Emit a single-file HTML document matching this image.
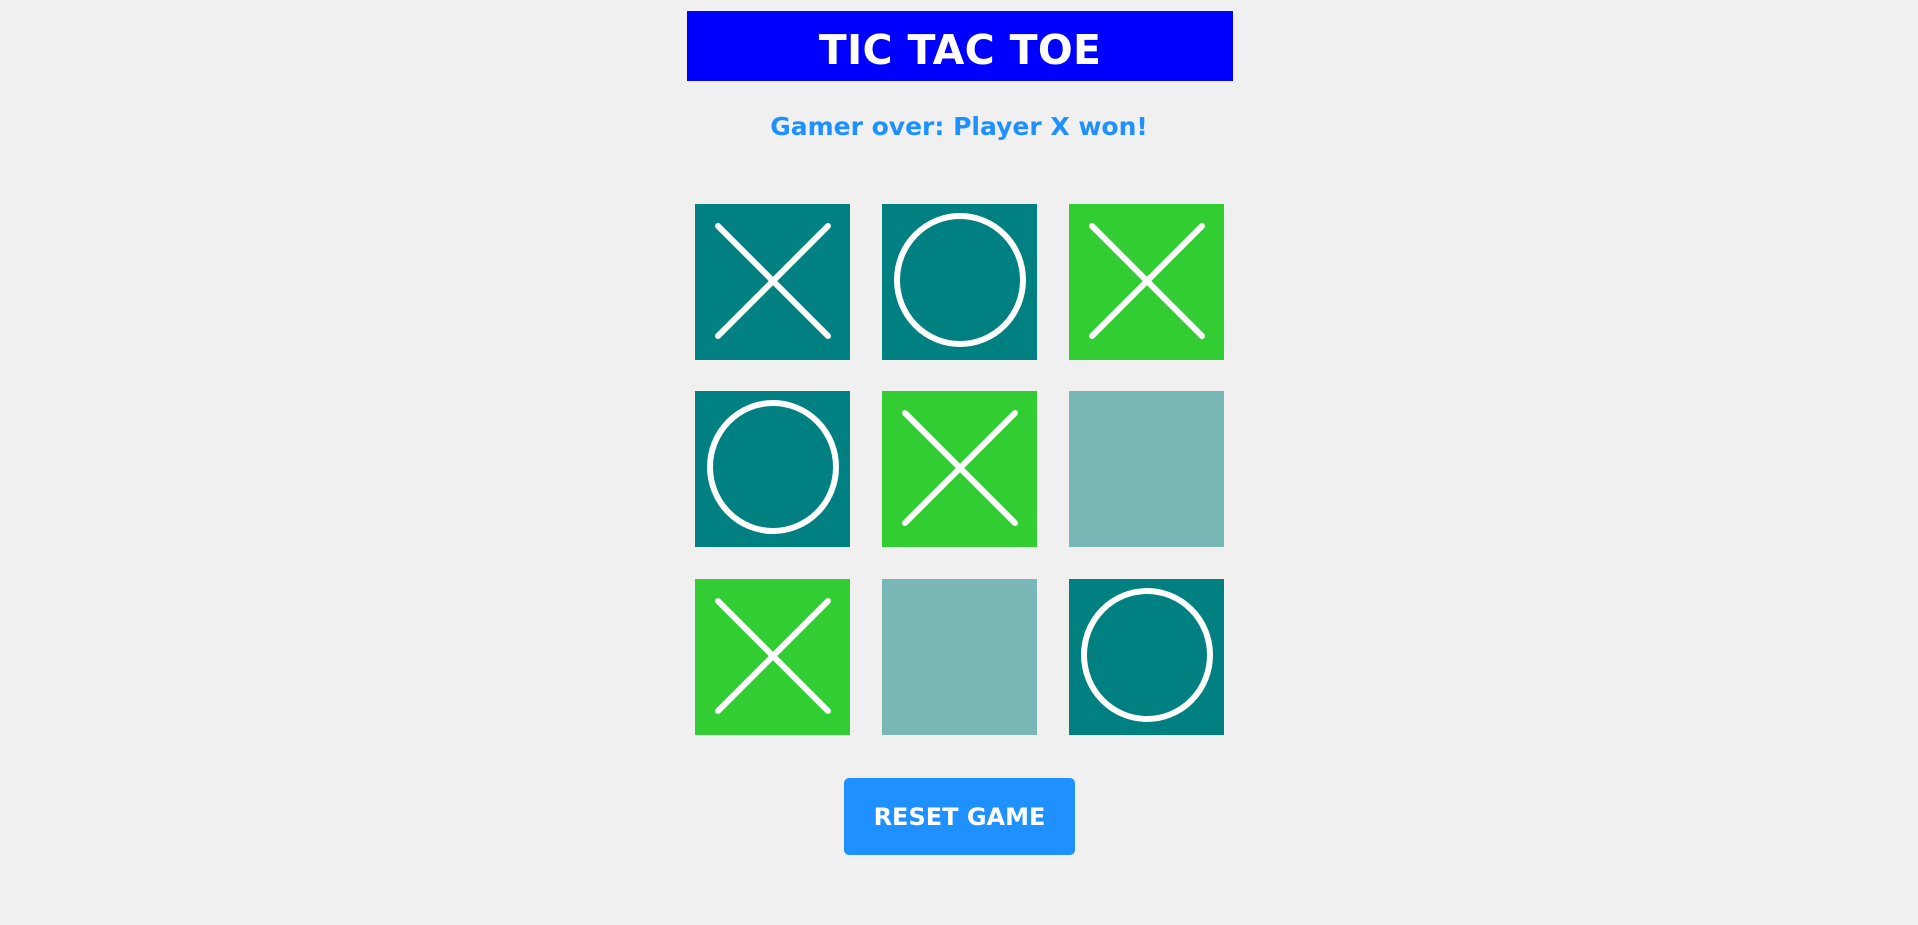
<!DOCTYPE html>
<html><head><style>
body{margin:0;width:1918px;height:925px;background:#f0f0f0;position:relative;overflow:hidden;font-family:"DejaVu Sans","Liberation Sans",sans-serif}
.h{position:absolute;left:687px;top:11px;width:546px;height:70px;background:#0000ff;color:#fff;font-weight:bold;font-size:41px;text-align:center;line-height:78px;letter-spacing:0.3px}
.s{position:absolute;left:0;width:1918px;top:112px;text-align:center;color:#1e90ff;font-weight:bold;font-size:25px}
.c{position:absolute;width:155px;height:156px}
.t{background:#008080}.g{background:#32cd32}.e{background:#7ab8b8}
.b{position:absolute;left:844px;top:778px;width:231px;height:77px;background:#1e90ff;border-radius:5px;color:#fff;font-weight:bold;font-size:24px;text-align:center;line-height:78px}
svg{position:absolute;left:0;top:0}
</style></head><body>
<div class="h">TIC TAC TOE</div>
<div class="s">Gamer over: Player X won!</div>
<div class="c t" style="left:695px;top:204px"><svg width="155" height="156"><path d="M23 22L133 132M133 22L23 132" stroke="#fff" stroke-width="6" stroke-linecap="round"/></svg></div>
<div class="c t" style="left:882px;top:204px"><svg width="155" height="156"><ellipse cx="78" cy="76" rx="63" ry="64" fill="none" stroke="#fff" stroke-width="6"/></svg></div>
<div class="c g" style="left:1069px;top:204px"><svg width="155" height="156"><path d="M23 22L133 132M133 22L23 132" stroke="#fff" stroke-width="6" stroke-linecap="round"/></svg></div>
<div class="c t" style="left:695px;top:391px"><svg width="155" height="156"><ellipse cx="78" cy="76" rx="63" ry="64" fill="none" stroke="#fff" stroke-width="6"/></svg></div>
<div class="c g" style="left:882px;top:391px"><svg width="155" height="156"><path d="M23 22L133 132M133 22L23 132" stroke="#fff" stroke-width="6" stroke-linecap="round"/></svg></div>
<div class="c e" style="left:1069px;top:391px"></div>
<div class="c g" style="left:695px;top:579px"><svg width="155" height="156"><path d="M23 22L133 132M133 22L23 132" stroke="#fff" stroke-width="6" stroke-linecap="round"/></svg></div>
<div class="c e" style="left:882px;top:579px"></div>
<div class="c t" style="left:1069px;top:579px"><svg width="155" height="156"><ellipse cx="78" cy="76" rx="63" ry="64" fill="none" stroke="#fff" stroke-width="6"/></svg></div>
<div class="b">RESET GAME</div>
</body></html>
